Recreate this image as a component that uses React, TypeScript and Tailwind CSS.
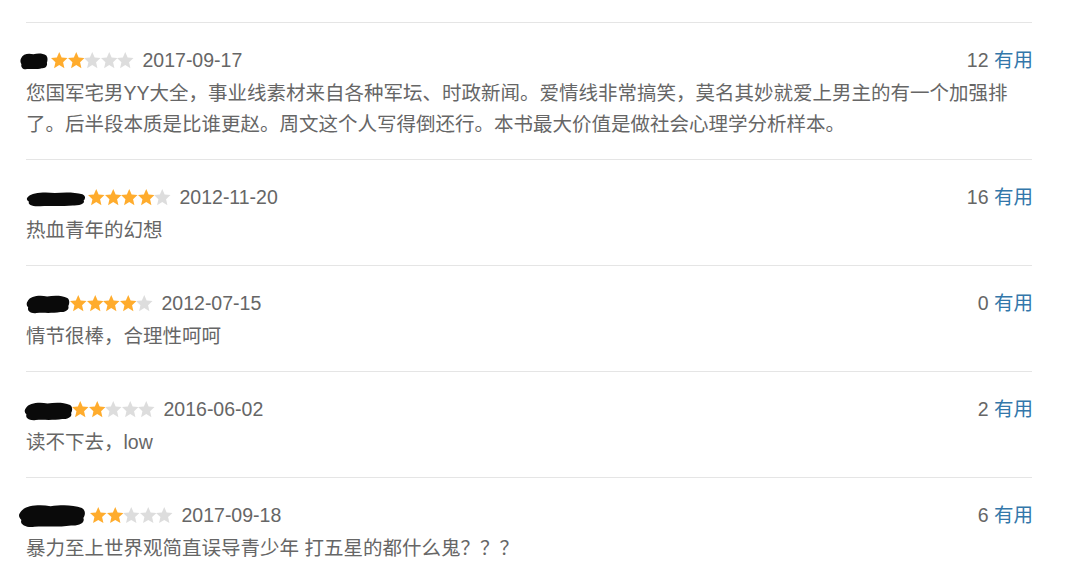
import React from "react";

interface Comment {
  rating: number;
  date: string;
  votes: number;
  text: string;
  nameWidth: number;
  blob: { left: number; width: number; top: number; height: number };
}

const comments: Comment[] = [
  {
    rating: 2,
    date: "2017-09-17",
    votes: 12,
    text: "您国军宅男YY大全，事业线素材来自各种军坛、时政新闻。爱情线非常搞笑，莫名其妙就爱上男主的有一个加强排了。后半段本质是比谁更赵。周文这个人写得倒还行。本书最大价值是做社会心理学分析样本。",
    nameWidth: 25,
    blob: { left: -6, width: 28, top: -9, height: 18 },
  },
  {
    rating: 4,
    date: "2012-11-20",
    votes: 16,
    text: "热血青年的幻想",
    nameWidth: 62,
    blob: { left: 0, width: 60, top: -7, height: 16 },
  },
  {
    rating: 4,
    date: "2012-07-15",
    votes: 0,
    text: "情节很棒，合理性呵呵",
    nameWidth: 44,
    blob: { left: 0, width: 44, top: -10, height: 20 },
  },
  {
    rating: 2,
    date: "2016-06-02",
    votes: 2,
    text: "读不下去，low",
    nameWidth: 46,
    blob: { left: -2, width: 49, top: -9, height: 20 },
  },
  {
    rating: 2,
    date: "2017-09-18",
    votes: 6,
    text: "暴力至上世界观简直误导青少年 打五星的都什么鬼？？？",
    nameWidth: 64,
    blob: { left: -8, width: 68, top: -13, height: 25 },
  },
];

function Star({ on }: { on: boolean }) {
  return (
    <svg width="16.5" height="16.5" viewBox="1 1.2 22 21.4" className="shrink-0">
      <polygon
        points="12,1 15.2,8.3 23,9 17.1,14.4 18.9,22.4 12,18.3 5.1,22.4 6.9,14.4 1,9 8.8,8.3"
        fill={on ? "#ffac2d" : "#dddddd"}
      />
    </svg>
  );
}

function Redacted({ c }: { c: Comment }) {
  const { left, width, top, height } = c.blob;
  return (
    <span className="relative inline-block h-[31px] shrink-0" style={{ width: c.nameWidth }}>
      <svg
        className="absolute"
        style={{ left, top: 15.5 + top, width, height }}
        viewBox="0 0 100 40"
        preserveAspectRatio="none"
      >
        <path
          d="M4 14 C10 4 30 2 48 5 C62 3 80 2 94 8 C100 12 99 20 96 24 C99 30 92 37 78 36 C60 39 40 37 24 38 C12 40 2 34 5 27 C0 22 1 18 4 14 Z"
          fill="#0a0a0a"
        />
      </svg>
    </span>
  );
}

function CommentItem({ c }: { c: Comment }) {
  return (
    <div className="border-t border-[#e5e5e5] pt-[22px] pb-[19px]">
      <div className="flex h-[31px] items-center justify-between">
        <div className="flex items-center">
          <Redacted c={c} />
          <span className="flex">
            {[0, 1, 2, 3, 4].map((i) => (
              <Star key={i} on={i < c.rating} />
            ))}
          </span>
          <span className="ml-[9px] text-[#666]">{c.date}</span>
        </div>
        <div className="mr-[-1px]">
          <span className="text-[#666]">{c.votes}</span>{" "}
          <span className="text-[#3377aa]">有用</span>
        </div>
      </div>
      <p className="mt-[2px] leading-[31px] text-[#666]">{c.text}</p>
    </div>
  );
}

export default function App() {
  return (
    <div
      className="min-h-[584px] bg-white pt-[22px] text-[19.5px] leading-[31px]"
      style={{ fontFamily: '"Liberation Sans", Arial, "Noto Sans CJK SC", sans-serif' }}
    >
      <div className="ml-[26px] w-[1006px]">
        {comments.map((c, i) => (
          <CommentItem key={i} c={c} />
        ))}
      </div>
    </div>
  );
}
